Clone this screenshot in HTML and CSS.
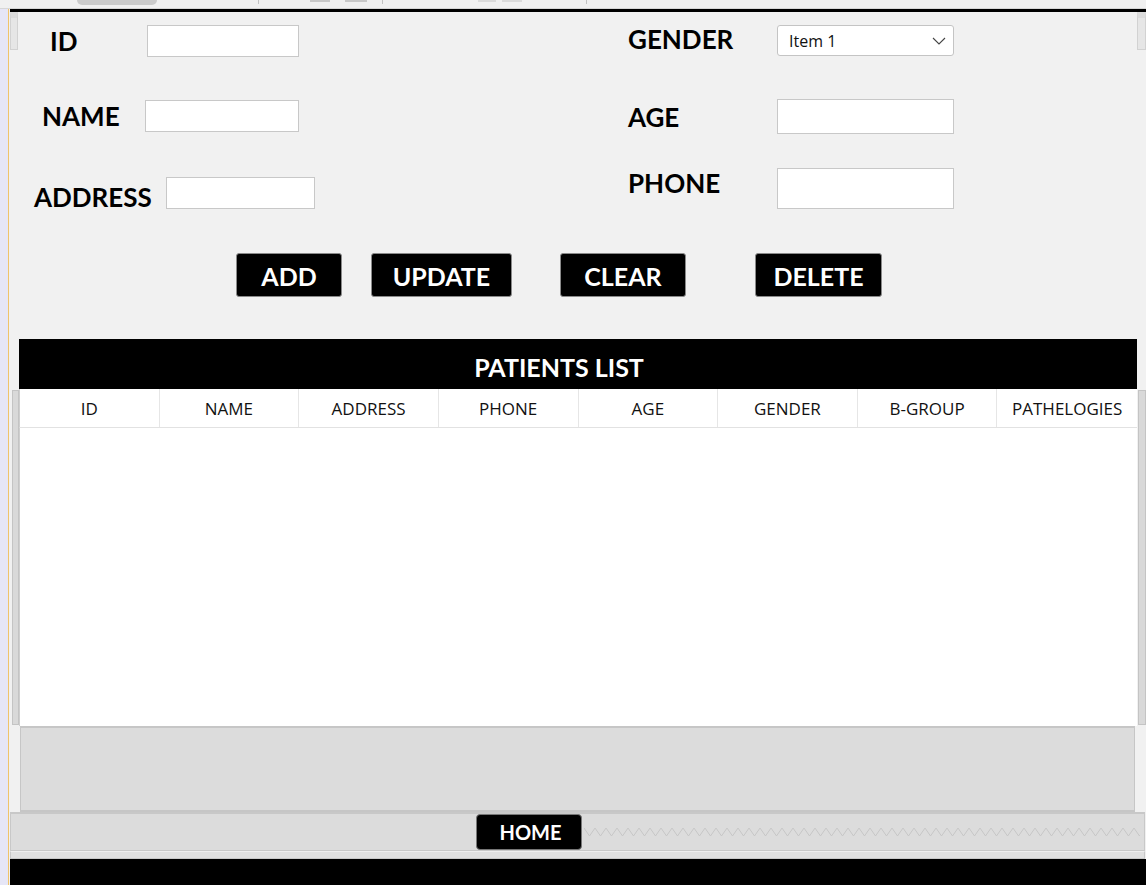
FILE: index.html
```html
<!DOCTYPE html>
<html>
<head>
<meta charset="utf-8">
<link rel="stylesheet" href="styles.css">
</head>
<body>
<div class="app">
  <div class="topstrip">
    <div class="pill"></div>
    <div class="sep sep-a"></div>
    <div class="mark mark-a"></div>
    <div class="mark mark-b"></div>
    <div class="sep sep-b"></div>
    <div class="mark mark-c"></div>
    <div class="mark mark-d"></div>
    <div class="sep sep-c"></div>
  </div>
  <div class="main">
    <div class="gutter"></div>
    <div class="content">
      <div class="form-area">
        <div class="stub"></div>
        <div class="form-body">
          <div class="fields">
            <div class="col col-left">
              <div class="row row-id"><span class="lbl">ID</span><div class="box"></div></div>
              <div class="row row-name"><span class="lbl">NAME</span><div class="box"></div></div>
              <div class="row row-address"><span class="lbl">ADDRESS</span><div class="box"></div></div>
            </div>
            <div class="col col-right">
              <div class="row row-gender"><span class="lbl">GENDER</span>
                <div class="select"><span>Item 1</span>
                  <svg width="14" height="8" viewBox="0 0 14 8"><path d="M1 1 L7 7 L13 1" fill="none" stroke="#444" stroke-width="1.1"/></svg>
                </div>
              </div>
              <div class="row row-age"><span class="lbl">AGE</span><div class="box"></div></div>
              <div class="row row-phone"><span class="lbl">PHONE</span><div class="box"></div></div>
            </div>
          </div>
          <div class="actions">
            <div class="btn btn-add">ADD</div>
            <div class="btn btn-update">UPDATE</div>
            <div class="btn btn-clear">CLEAR</div>
            <div class="btn btn-delete">DELETE</div>
          </div>
        </div>
        <div class="stub stub-right"></div>
      </div>
      <div class="list-wrap">
        <div class="side side-left">
          <div class="side-top"></div>
          <div class="track"></div>
        </div>
        <div class="center">
          <div class="title">PATIENTS LIST</div>
          <div class="thead">
            <div class="th">ID</div>
            <div class="th">NAME</div>
            <div class="th">ADDRESS</div>
            <div class="th">PHONE</div>
            <div class="th">AGE</div>
            <div class="th">GENDER</div>
            <div class="th">B-GROUP</div>
            <div class="th th-last">PATHELOGIES</div>
          </div>
          <div class="tbody"></div>
          <div class="panel"></div>
        </div>
        <div class="side side-right">
          <div class="side-top"></div>
          <div class="track"></div>
        </div>
      </div>
      <div class="homebar">
        <div class="home-btn">HOME</div>
        <div class="zigzag">
          <svg width="100%" height="12">
            <defs>
              <pattern id="zz" width="11" height="12" patternUnits="userSpaceOnUse">
                <path d="M0 2 L5.5 10 L11 2" fill="none" stroke="#c6c6c6" stroke-width="1"/>
              </pattern>
            </defs>
            <rect width="100%" height="12" fill="url(#zz)"/>
          </svg>
        </div>
      </div>
      <div class="thinbar"></div>
      <div class="footer"></div>
    </div>
  </div>
</div>
</body>
</html>
```

FILE: styles.css
```css
html, body {
  margin: 0;
  padding: 0;
}
body {
  background: #f0f0f0;
  font-family: "Lato", "Liberation Sans", sans-serif;
  color: #000;
}
.app {
  width: 1146px;
  height: 885px;
  display: flex;
  flex-direction: column;
  overflow: hidden;
}

/* top strip */
.topstrip {
  height: 8px;
  border-bottom: 1px solid #d6d6d6;
  background: #f0f0f0;
  display: flex;
  align-items: flex-start;
  flex: 0 0 auto;
}
.pill {
  margin-left: 77px;
  width: 80px;
  height: 5px;
  background: #cbcbcb;
  border-radius: 0 0 8px 8px;
}
.sep {
  width: 1px;
  height: 4px;
  background: #c2c2c2;
}
.sep-a { margin-left: 101px; }
.mark {
  height: 2px;
  background: #c8c8c8;
}
.mark-a { margin-left: 51px; width: 20px; }
.mark-b { margin-left: 15px; width: 22px; }
.sep-b { margin-left: 15px; }
.mark-c { margin-left: 95px; width: 18px; background: #dadada; }
.mark-d { margin-left: 6px; width: 20px; background: #dadada; }
.sep-c { margin-left: 64px; }

.main {
  flex: 1;
  display: flex;
}
.gutter {
  width: 10px;
  flex: 0 0 10px;
  background: linear-gradient(to right, #e6e6f6 0 8px, #f0c36a 8px 9px, #f0f0f0 9px 10px);
}
.content {
  flex: 1;
  display: flex;
  flex-direction: column;
  border-top: 3px solid #000;
}

/* form */
.form-area {
  height: 327px;
  flex: 0 0 auto;
  display: flex;
  background: #f1f1f1;
}
.stub {
  width: 8px;
  height: 38px;
  box-sizing: border-box;
  border: 1px solid #d2d2d2;
  border-top: 6px solid #dcdcdc;
  background: #e6e6e6;
}
.stub-right {
  width: 9px;
}
.form-body {
  flex: 1;
}
.fields {
  display: flex;
  margin-top: 13px;
}
.col {
  display: flex;
  flex-direction: column;
}
.col-left {
  width: 610px;
}
.row {
  display: flex;
  align-items: center;
}
.lbl {
  font-weight: 700;
  font-size: 26px;
  line-height: 1;
  flex: 0 0 auto;
  box-sizing: border-box;
}
.box {
  align-self: stretch;
  background: #fff;
  border: 1px solid #c8c8c8;
  box-sizing: border-box;
}
.row-id { height: 32px; padding-left: 32px; }
.row-id .lbl { width: 97px; }
.row-id .box { width: 152px; }
.row-name { height: 32px; margin-top: 43px; padding-left: 24px; }
.row-name .lbl { width: 103px; }
.row-name .box { width: 154px; }
.row-address { height: 32px; margin-top: 45px; padding-left: 16px; }
.row-address .lbl { width: 132px; padding-top: 8px; }
.row-address .box { width: 149px; }

.row-gender { height: 31px; }
.row-gender .lbl { width: 149px; padding-bottom: 4px; }
.row-age { height: 35px; margin-top: 43px; }
.row-age .lbl { width: 149px; }
.row-age .box { width: 177px; }
.row-phone { height: 41px; margin-top: 34px; }
.row-phone .lbl { width: 149px; padding-bottom: 11px; }
.row-phone .box { width: 177px; }

.select {
  align-self: stretch;
  width: 177px;
  box-sizing: border-box;
  background: #fff;
  border: 1px solid #c4c4c4;
  border-radius: 3px;
  display: flex;
  align-items: center;
  justify-content: space-between;
  padding: 0 7px 0 11px;
  font-family: "Open Sans", "Noto Sans", sans-serif;
  font-size: 16px;
  color: #111;
}

.actions {
  display: flex;
  margin-top: 44px;
  height: 44px;
  padding-left: 218px;
}
.btn {
  background: #000;
  color: #fff;
  border: 1px solid #8a8a8a;
  border-radius: 3px;
  box-sizing: border-box;
  font-weight: 700;
  font-size: 25px;
  display: flex;
  align-items: center;
  justify-content: center;
  padding-top: 2px;
}
.btn-add { width: 106px; }
.btn-update { width: 141px; margin-left: 29px; }
.btn-clear { width: 126px; margin-left: 48px; }
.btn-delete { width: 127px; margin-left: 69px; }

/* list */
.list-wrap {
  height: 473px;
  flex: 0 0 auto;
  display: flex;
  background: #f1f1f1;
}
.side {
  width: 9px;
  flex: 0 0 9px;
  display: flex;
  flex-direction: column;
}
.side-top {
  height: 51px;
}
.track {
  height: 335px;
  box-sizing: border-box;
  background: #d9d9d9;
  border: 1px solid #c4c4c4;
}
.side-left .track {
  margin-left: 2px;
}
.side-right .track {
  margin-left: 1px;
}
.center {
  flex: 1;
  display: flex;
  flex-direction: column;
}
.title {
  height: 50px;
  box-sizing: border-box;
  background: #000;
  color: #fff;
  font-weight: 700;
  font-size: 25px;
  display: flex;
  align-items: center;
  justify-content: center;
  padding-top: 6px;
  padding-right: 38px;
}
.thead {
  display: grid;
  grid-template-columns: repeat(8, 1fr);
  height: 39px;
  box-sizing: border-box;
  background: #fff;
  border-left: 1px solid #cfcfcf;
  border-bottom: 1px solid #e2e2e2;
}
.th {
  border-right: 1px solid #e6e6e6;
  display: flex;
  align-items: center;
  justify-content: center;
  font-family: "Open Sans", "Noto Sans", sans-serif;
  font-size: 17px;
  color: #111;
  padding-top: 1px;
}
.th-last {
  border-right: none;
}
.tbody {
  height: 298px;
  background: #fff;
  border-left: 1px solid #cfcfcf;
}
.panel {
  height: 86px;
  box-sizing: border-box;
  background: #dcdcdc;
  border: 1px solid #c6c6c6;
  border-top-width: 2px;
  border-bottom-width: 2px;
  margin: 0 2px 0 1px;
}

/* home bar */
.homebar {
  height: 39px;
  flex: 0 0 auto;
  box-sizing: border-box;
  margin-right: 1px;
  background: #dcdcdc;
  border: 1px solid #c8c8c8;
  border-top-width: 2px;
  display: flex;
  padding-left: 465px;
}
.home-btn {
  width: 106px;
  box-sizing: border-box;
  background: #000;
  color: #fff;
  border: 1px solid #777;
  border-radius: 4px;
  font-weight: 700;
  font-size: 20px;
  display: flex;
  align-items: center;
  justify-content: center;
  padding-left: 3px;
}
.zigzag {
  flex: 1;
  display: flex;
  align-items: center;
  margin: 0 4px 0 2px;
}
.thinbar {
  height: 8px;
  flex: 0 0 auto;
  box-sizing: border-box;
  margin-right: 1px;
  background: #e0e0e0;
  border: 1px solid #c8c8c8;
  border-top-color: #eeeeee;
}
.footer {
  flex: 1;
  background: #000;
}
```
